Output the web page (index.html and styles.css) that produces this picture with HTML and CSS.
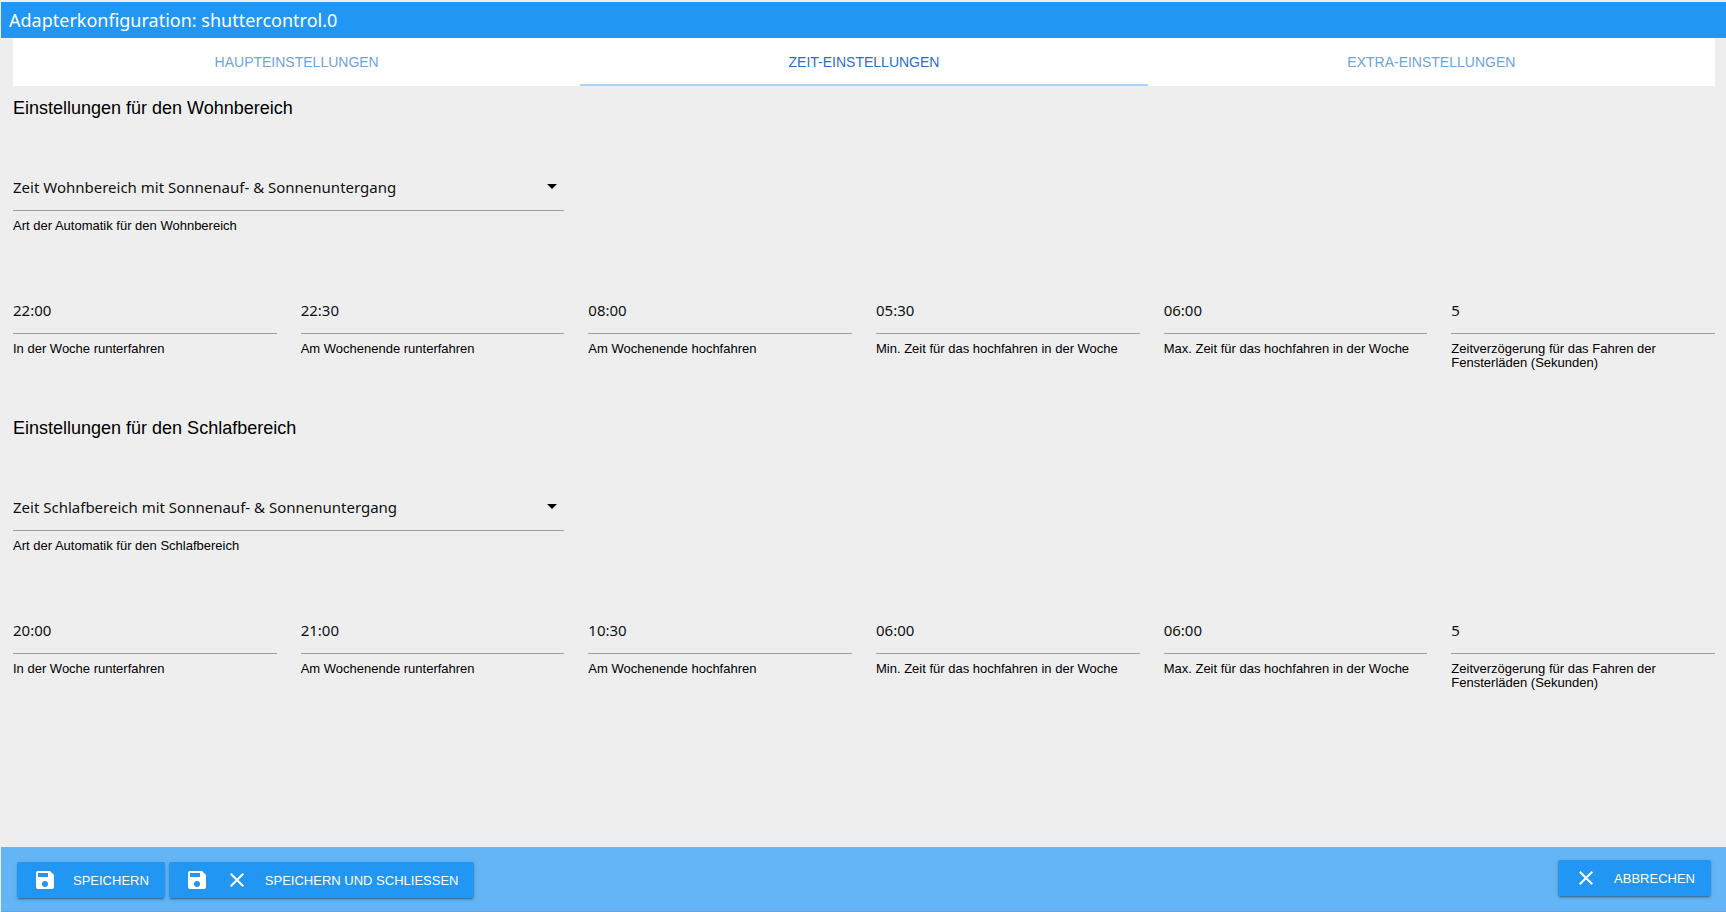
FILE: index.html
```html
<!DOCTYPE html>
<html lang="de">
<head>
<meta charset="utf-8">
<title>Adapterkonfiguration: shuttercontrol.0</title>
<link rel="stylesheet" href="styles.css">
</head>
<body>
<svg class="sprite" aria-hidden="true">
  <symbol id="save" viewBox="0 0 24 24"><path fill="currentColor" d="M17 3H5a2 2 0 0 0-2 2v14a2 2 0 0 0 2 2h14a2 2 0 0 0 2-2V7zm-5 16a3 3 0 1 1 0-6 3 3 0 0 1 0 6zm3-10H5V5h10z"/></symbol>
  <symbol id="close" viewBox="0 0 24 24"><path fill="currentColor" d="M19 6.41 17.59 5 12 10.59 6.41 5 5 6.41 10.59 12 5 17.59 6.41 19 12 13.41 17.59 19 19 17.59 13.41 12z"/></symbol>
  <symbol id="caret" viewBox="0 0 24 24"><path fill="currentColor" d="M7 10l5 5 5-5z"/></symbol>
</svg>
<header class="title-bar"><h1 class="title">Adapterkonfiguration: shuttercontrol.0</h1></header>
<main class="content">
  <nav class="tabs">
    <a class="tab" href="#main">HAUPTEINSTELLUNGEN</a>
    <a class="tab active" href="#time" aria-current="page">ZEIT-EINSTELLUNGEN</a>
    <a class="tab" href="#extra">EXTRA-EINSTELLUNGEN</a>
  </nav>
  <section class="section">
    <h2 class="heading">Einstellungen für den Wohnbereich</h2>
    <div class="fields">
      <div class="field wide">
        <div class="select-wrap">
          <select class="control" id="living-type"><option>Zeit Wohnbereich mit Sonnenauf- &amp; Sonnenuntergang</option></select>
          <svg class="caret" aria-hidden="true"><use href="#caret"/></svg>
        </div>
        <label class="label" for="living-type">Art der Automatik für den Wohnbereich</label>
      </div>
    </div>
    <div class="fields times">
      <div class="field"><input class="control" type="text" id="l1" value="22:00"><label class="label" for="l1">In der Woche runterfahren</label></div>
      <div class="field"><input class="control" type="text" id="l2" value="22:30"><label class="label" for="l2">Am Wochenende runterfahren</label></div>
      <div class="field"><input class="control" type="text" id="l3" value="08:00"><label class="label" for="l3">Am Wochenende hochfahren</label></div>
      <div class="field"><input class="control" type="text" id="l4" value="05:30"><label class="label" for="l4">Min. Zeit für das hochfahren in der Woche</label></div>
      <div class="field"><input class="control" type="text" id="l5" value="06:00"><label class="label" for="l5">Max. Zeit für das hochfahren in der Woche</label></div>
      <div class="field"><input class="control" type="text" id="l6" value="5"><label class="label" for="l6">Zeitverzögerung für das Fahren der Fensterläden (Sekunden)</label></div>
    </div>
  </section>
  <section class="section">
    <h2 class="heading">Einstellungen für den Schlafbereich</h2>
    <div class="fields">
      <div class="field wide">
        <div class="select-wrap">
          <select class="control" id="sleep-type"><option>Zeit Schlafbereich mit Sonnenauf- &amp; Sonnenuntergang</option></select>
          <svg class="caret" aria-hidden="true"><use href="#caret"/></svg>
        </div>
        <label class="label" for="sleep-type">Art der Automatik für den Schlafbereich</label>
      </div>
    </div>
    <div class="fields times">
      <div class="field"><input class="control" type="text" id="s1" value="20:00"><label class="label" for="s1">In der Woche runterfahren</label></div>
      <div class="field"><input class="control" type="text" id="s2" value="21:00"><label class="label" for="s2">Am Wochenende runterfahren</label></div>
      <div class="field"><input class="control" type="text" id="s3" value="10:30"><label class="label" for="s3">Am Wochenende hochfahren</label></div>
      <div class="field"><input class="control" type="text" id="s4" value="06:00"><label class="label" for="s4">Min. Zeit für das hochfahren in der Woche</label></div>
      <div class="field"><input class="control" type="text" id="s5" value="06:00"><label class="label" for="s5">Max. Zeit für das hochfahren in der Woche</label></div>
      <div class="field"><input class="control" type="text" id="s6" value="5"><label class="label" for="s6">Zeitverzögerung für das Fahren der Fensterläden (Sekunden)</label></div>
    </div>
  </section>
</main>
<footer class="footer">
  <div class="actions">
    <button class="button" type="button"><svg class="icon" aria-hidden="true"><use href="#save"/></svg>SPEICHERN</button>
    <button class="button" type="button"><svg class="icon" aria-hidden="true"><use href="#save"/></svg><svg class="icon" aria-hidden="true"><use href="#close"/></svg>SPEICHERN UND SCHLIESSEN</button>
  </div>
  <button class="button" type="button"><svg class="icon" aria-hidden="true"><use href="#close"/></svg>ABBRECHEN</button>
</footer>
</body>
</html>
```
FILE: styles.css
```css
* {
  box-sizing: border-box;
}

body {
  display: flex;
  flex-direction: column;
  min-height: 100vh;
  margin: 0;
  padding: 2px 0 0 1px;
  background: #eee;
  color: #000;
  font-family: "Liberation Sans", Arial, sans-serif;
}

.sprite {
  display: none;
}

.title-bar {
  padding: 0 8px;
  background: #2196f3;
  color: #fff;
}

.title {
  margin: 0;
  font: 400 18px/36px "Noto Sans", sans-serif;
}

.content {
  flex: 1;
  padding: 0 11px 0 12px;
}

.tabs {
  display: grid;
  grid-template-columns: repeat(3, 1fr);
  background: #fff;
}

.tab {
  height: 48px;
  color: #6fa3dc;
  font-size: 14px;
  line-height: 48px;
  text-align: center;
  text-decoration: none;
}

.tab.active {
  border-bottom: 2px solid #a6d5fa;
  color: #2a6fc9;
}

.section {
  display: flex;
  flex-direction: column;
  gap: 48px;
  padding-top: 12px;
  margin-bottom: 36px;
}

.heading {
  margin: 0;
  font-size: 18px;
  font-weight: 400;
  line-height: 20px;
}

.fields {
  display: grid;
  grid-template-columns: repeat(6, 1fr);
  column-gap: 24px;
}

.times {
  padding-top: 8px;
}

.field {
  display: flex;
  flex-direction: column;
  gap: 8px;
}

.wide {
  grid-column: span 2;
}

.select-wrap {
  position: relative;
}

.control {
  appearance: none;
  display: block;
  width: 100%;
  height: 45px;
  margin: 0;
  padding: 0 0 3px;
  border: 0;
  border-bottom: 1px solid #9e9e9e;
  border-radius: 0;
  outline: 0;
  background: transparent;
  color: #111;
  font: 400 15px "Noto Sans", sans-serif;
}

.caret {
  position: absolute;
  top: 8px;
  right: 0;
  width: 24px;
  height: 24px;
  pointer-events: none;
}

.label {
  font-size: 13px;
  line-height: 14px;
}

.footer {
  display: flex;
  justify-content: space-between;
  align-items: flex-start;
  padding: 13px 15px 13px 16px;
  border-bottom: 1px solid #8a9aa8;
  background: #64b5f6;
}

.actions {
  display: flex;
  gap: 4px;
  padding-top: 2px;
}

.button {
  display: flex;
  align-items: center;
  gap: 16px;
  height: 36px;
  padding: 0 16px;
  border: 0;
  border-radius: 2px;
  background: #2196f3;
  box-shadow: 0 2px 2px rgba(0, 0, 0, .14), 0 1px 5px rgba(0, 0, 0, .12), 0 3px 1px -2px rgba(0, 0, 0, .2);
  color: #fff;
  font: 400 13px "Liberation Sans", Arial, sans-serif;
}

.icon {
  width: 24px;
  height: 24px;
}
```
